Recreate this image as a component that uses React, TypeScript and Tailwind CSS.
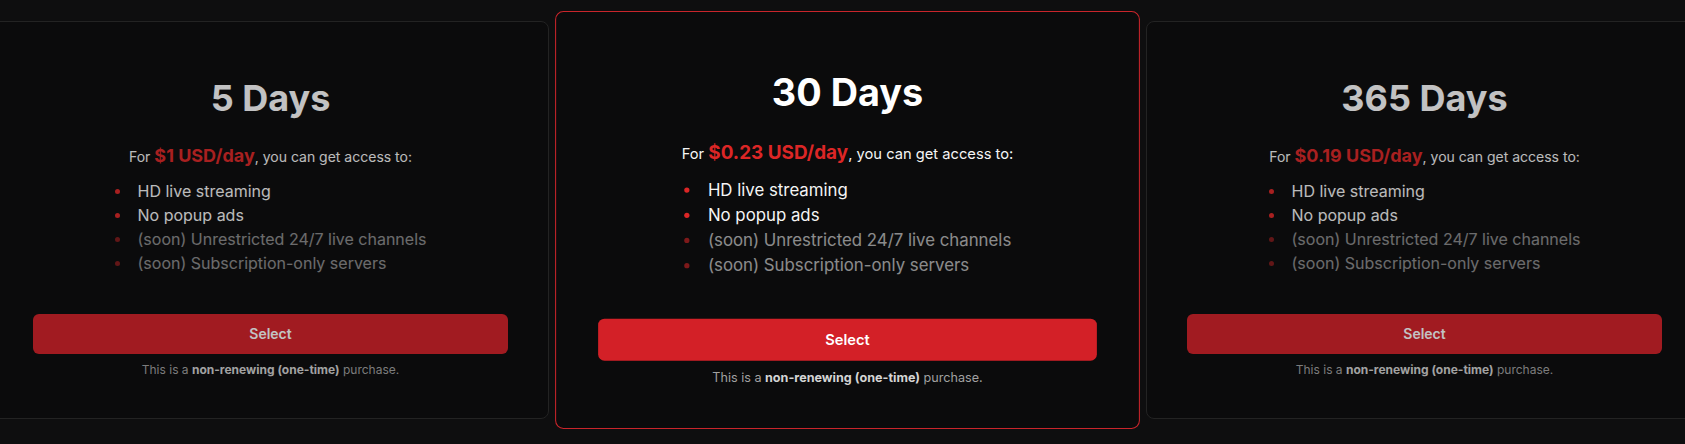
const FEATURES = [
  { label: "HD live streaming", soon: false },
  { label: "No popup ads", soon: false },
  { label: "(soon) Unrestricted 24/7 live channels", soon: true },
  { label: "(soon) Subscription-only servers", soon: true },
];

const PLANS = [
  { title: "5 Days", price: "$1 USD/day", featured: false },
  { title: "30 Days", price: "$0.23 USD/day", featured: true },
  { title: "365 Days", price: "$0.19 USD/day", featured: false },
];

function PlanCard({ title, price, featured }: { title: string; price: string; featured: boolean }) {
  return (
    <div
      className={
        featured
          ? "w-[557px] shrink-0 rounded-lg border border-[#c9252b] bg-[#0b0b0c] px-10 pt-[56px] pb-10 flex flex-col items-center scale-105"
          : "w-[557px] shrink-0 rounded-lg border border-[#2a2a2a] bg-[#0b0b0c] px-10 pt-[56px] pb-10 flex flex-col items-center opacity-75"
      }
    >
      <h2 className="text-4xl font-bold text-white">{title}</h2>

      <p className="mt-6 text-sm leading-7 text-neutral-100">
        For <span className="text-lg font-bold text-[#dc2626]">{price}</span>, you can get access to:
      </p>

      {/* feature list, custom dots */}
      <ul className="mt-2 w-fit text-base leading-6">
        {FEATURES.map((f) => (
          <li
            key={f.label}
            className={f.soon ? "flex items-center gap-[18px] text-neutral-100 opacity-55" : "flex items-center gap-[18px] text-neutral-100"}
          >
            <span className="h-[5px] w-[5px] shrink-0 rounded-full bg-[#dc2626]" />
            {f.label}
          </li>
        ))}
      </ul>

      <button className="mt-[39px] h-10 w-full rounded-md bg-[#d32027] text-sm font-semibold text-white">
        Select
      </button>
      <p className="mt-2 text-xs leading-4 text-neutral-400">
        This is a <span className="font-bold text-neutral-300">non-renewing (one-time)</span> purchase.
      </p>
    </div>
  );
}

export default function App() {
  return (
    <div className="min-h-screen overflow-hidden bg-[#0e0e0f] pt-[21px] font-['Inter',sans-serif]">
      <div className="-ml-2 flex gap-5">
        {PLANS.map((p) => (
          <PlanCard key={p.title} {...p} />
        ))}
      </div>
    </div>
  );
}
